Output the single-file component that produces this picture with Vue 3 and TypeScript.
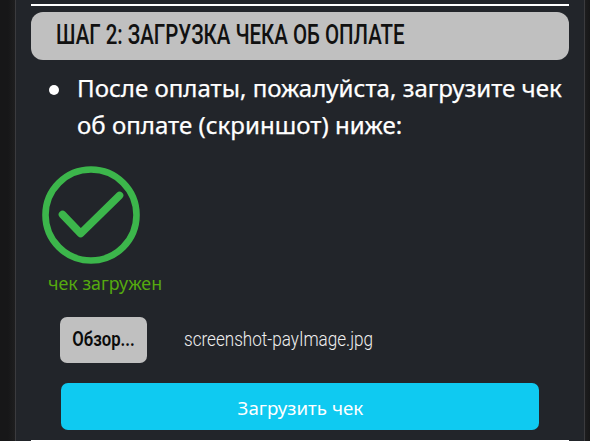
<script setup lang="ts">
import { ref } from 'vue'

const fileName = ref<string>('screenshot-payImage.jpg')
</script>

<template>
  <main class="page">
    <section class="panel">
      <hr class="rule" />
      <h2 class="title"><span class="title-text">ШАГ 2: ЗАГРУЗКА ЧЕКА ОБ ОПЛАТЕ</span></h2>
      <ul class="steps">
        <li>
          <span class="bullet"></span>
          <p><span class="line">После оплаты, пожалуйста, загрузите чек</span><span class="line">об оплате (скриншот) ниже:</span></p>
        </li>
      </ul>
      <div class="status">
        <svg class="check" viewBox="0 0 98 98" fill="none" stroke="#3cb64b">
          <circle cx="49" cy="49" r="45.5" stroke-width="6.6" />
          <path d="M20.5 48.5L38.7 67.5L77.5 29.5" stroke-width="7.6" stroke-linecap="round" stroke-linejoin="round" />
        </svg>
        <span class="status-text">чек загружен</span>
      </div>
      <div class="file-row">
        <button class="browse" type="button"><span class="browse-text">Обзор...</span></button>
        <span class="file-name">{{ fileName }}</span>
      </div>
      <button class="submit" type="button"><span class="submit-text">Загрузить чек</span></button>
      <hr class="rule" />
    </section>
  </main>
</template>

<style>
body {
  background: #19191a;
  overflow: hidden;
}
</style>

<style scoped>
.page {
  height: 441px;
  padding: 0 5px 0 15px;
  box-sizing: border-box;
  overflow: hidden;
  background: linear-gradient(90deg, #171718 0 8px, #1e1e1f 15px, #1e1e1f 584px, #171718 590px);
}
.panel {
  box-sizing: border-box;
  height: 460px;
  padding: 4px 15px 0;
  border: solid #3b3b3e;
  border-width: 0 1px;
  background: #22252a;
}
.rule {
  height: 2px;
  margin: 0;
  border: 0;
  background: #fff;
}
.title {
  display: flex;
  align-items: center;
  height: 48px;
  margin: 6px 0 0;
  padding: 0 0 1px 25px;
  box-sizing: border-box;
  border-radius: 12px;
  background: #c0c0c0;
  color: #111;
  font: 500 27px/41px Roboto, sans-serif;
}
.title-text {
  white-space: nowrap;
  transform: scaleX(0.758);
  transform-origin: left;
}
.steps {
  list-style: none;
  margin: 10px 0 0;
  padding: 0 0 0 18px;
  color: #fff;
  font: 400 23px/37px "Noto Sans", sans-serif;
}
.steps li {
  display: flex;
}
.steps p {
  margin: 0 0 0 18px;
}
.bullet {
  flex: none;
  width: 10px;
  height: 10px;
  margin-top: 15px;
  border-radius: 50%;
  background: #fff;
}
.line {
  display: block;
  width: max-content;
  transform: scaleX(1.046);
  transform-origin: left;
  -webkit-text-stroke: 0.25px #fff;
}
.status {
  display: flex;
  flex-direction: column;
  align-items: flex-start;
  padding: 22px 0 0 11px;
}
.check {
  width: 98px;
  height: 98px;
}
.status-text {
  margin: 6px 0 1px 6px;
  color: #55aa0f;
  font: 400 18px/26px "Noto Sans", sans-serif;
  white-space: nowrap;
  transform: scaleX(0.99);
  transform-origin: left;
}
.file-row {
  display: flex;
  align-items: center;
  margin: 20px 0 0 29px;
}
.browse {
  display: flex;
  justify-content: center;
  align-items: center;
  width: 87px;
  height: 46px;
  padding: 0 0 2px;
  border: 0;
  border-radius: 7px;
  background: #c0c0c0;
  color: #0b0b0b;
  font: 600 20px/30px Roboto, sans-serif;
}
.browse-text {
  transform: scaleX(0.835);
}
.file-name {
  margin: -2px 0 0 37px;
  color: #f0f0f0;
  font: 300 20px/30px Roboto, sans-serif;
  white-space: nowrap;
  transform: scaleX(0.855);
  transform-origin: left;
}
.submit {
  display: flex;
  justify-content: center;
  align-items: center;
  width: 478px;
  height: 47px;
  margin: 20px 0 10px 30px;
  padding: 3px 0 0;
  border: 0;
  border-radius: 7px;
  background: #0fcaf1;
  color: #fff;
  font: 400 18px/26px "Noto Sans", sans-serif;
}
.submit-text {
  transform: scaleX(1.04);
}
</style>
